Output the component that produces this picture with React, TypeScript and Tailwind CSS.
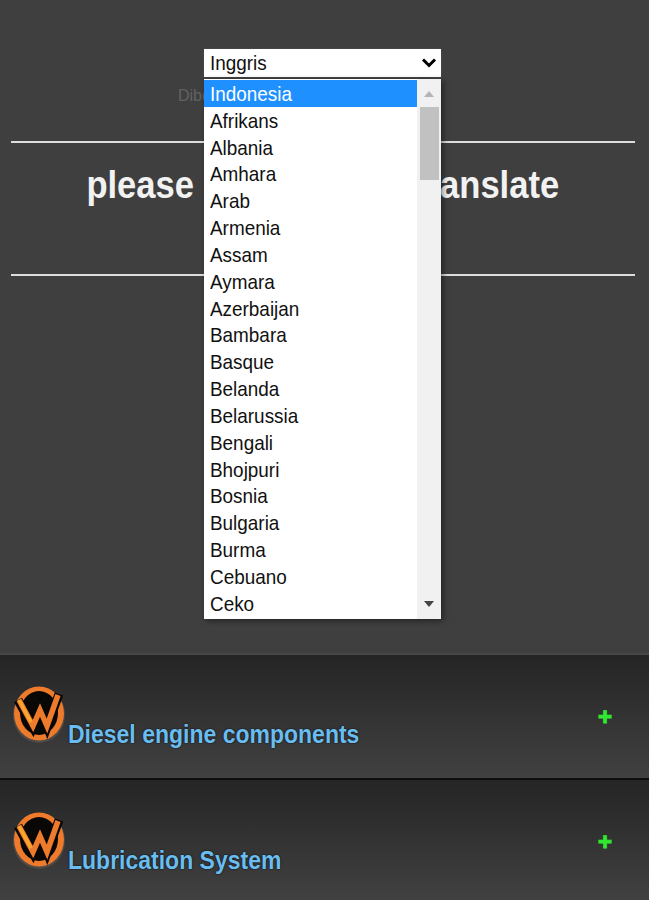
const langs = ["Afrikans","Albania","Amhara","Arab","Armenia","Assam","Aymara","Azerbaijan","Bambara","Basque","Belanda","Belarussia","Bengali","Bhojpuri","Bosnia","Bulgaria","Burma","Cebuano","Ceko"];

function Logo() {
  return (
    <svg width="54" height="58" viewBox="0 0 54 58" className="shrink-0">
      <ellipse cx="27" cy="30" rx="26" ry="28" fill="#4f4a46" />
      <ellipse cx="27" cy="28.5" rx="25" ry="27" fill="#ee7b2c" />
      <ellipse cx="27" cy="28" rx="19" ry="22" fill="#0a0806" />
      <path d="M6 15 L21 42 L28 26 L35 42 L47 9" fill="none" stroke="#0a0806" strokeWidth="9" />
      <path d="M7 15 L21 41 L28 25 L35 41 L46 10" fill="none" stroke="#ee7b2c" strokeWidth="5.5" />
      <path d="M7 15 L19 37" fill="none" stroke="#f9a52e" strokeWidth="3.5" />
    </svg>
  );
}

function Row({ title, top, plusTop }: { title: string; top: string; plusTop: string }) {
  return (
    <div className={`relative flex h-full items-start bg-gradient-to-b from-[#252525] to-[#414141] pl-[12px] ${top}`}>
      <Logo />
      <span className="ml-[2px] mt-[33px] origin-left scale-x-[0.92] whitespace-nowrap text-[25px] leading-[32px] font-bold text-[#69bdf0] [text-shadow:0_0_2px_#000]">{title}</span>
      <span className={`absolute right-[37px] ${plusTop} text-[24px] leading-[24px] font-bold text-[#2fe82f] [-webkit-text-stroke:1px_#2fe82f]`}>+</span>
    </div>
  );
}

export default function App() {
  return (
    <div className="relative h-[900px] w-[649px] overflow-hidden bg-[#3f3f3f] font-['Liberation_Sans',Arial,sans-serif]">
      <div className="flex h-[655px] flex-col items-center border-b-2 border-[#474747] pl-[11px] pr-[14px] pt-[86px]">
        <div className="ml-[167px] self-start whitespace-nowrap text-[16px] leading-[20px] text-[#626262]">Diberdayakan oleh Google</div>
        <div className="mt-[35px] h-[2px] w-full bg-[#dddddd]" />
        <div className="mt-[21px] scale-x-[0.91] whitespace-nowrap text-[38px] leading-[42px] font-bold text-[#f2f2f2]">please click here to translate</div>
        <div className="mt-[68px] h-[2px] w-full bg-[#dddddd]" />
      </div>
      <div className="h-[123px]"><Row title="Diesel engine components" top="pt-[30px]" plusTop="top-[50px]" /></div>
      <div className="h-[2px] bg-[#0e0e0e]" />
      <div className="h-[120px]"><Row title="Lubrication System" top="pt-[31px]" plusTop="top-[50px]" /></div>

      <div className="absolute left-[204px] top-[49px] flex h-[28px] w-[237px] items-center justify-between bg-white pl-[6px] pr-[4px] text-[#111111] shadow-[0_0_2px_#555]">
        <span className="origin-left scale-x-[0.9] text-[21px]">Inggris</span>
        <svg width="16" height="12" viewBox="0 0 16 12"><path d="M2 2.5 L8 8.5 L14 2.5" fill="none" stroke="#000" strokeWidth="3" /></svg>
      </div>
      <div className="absolute left-[204px] top-[79px] flex h-[540px] w-[237px] bg-white shadow-[2px_2px_6px_rgba(0,0,0,0.45)]">
        <div className="flex-1 pt-px">
          <div className="flex h-[27px] items-center bg-[#1e90ff] pl-[6px] text-[21px] text-white"><span className="origin-left scale-x-[0.9]">Indonesia</span></div>
          {langs.map((l) => (
            <div key={l} className="flex h-[26.85px] items-center pl-[6px] text-[21px] text-[#111111]"><span className="origin-left scale-x-[0.9]">{l}</span></div>
          ))}
        </div>
        <div className="flex w-[24px] flex-col items-center bg-[#f1f1f1]">
          <svg width="12" height="8" viewBox="0 0 12 8" className="mt-[11px]"><path d="M1 7 L6 1 L11 7 Z" fill="#b4b4b4" /></svg>
          <div className="mt-[9px] h-[73px] w-[19px] bg-[#c1c1c1]" />
          <div className="flex-1" />
          <svg width="12" height="8" viewBox="0 0 12 8" className="mb-[11px]"><path d="M1 1 L6 7 L11 1 Z" fill="#444444" /></svg>
        </div>
      </div>
    </div>
  );
}
